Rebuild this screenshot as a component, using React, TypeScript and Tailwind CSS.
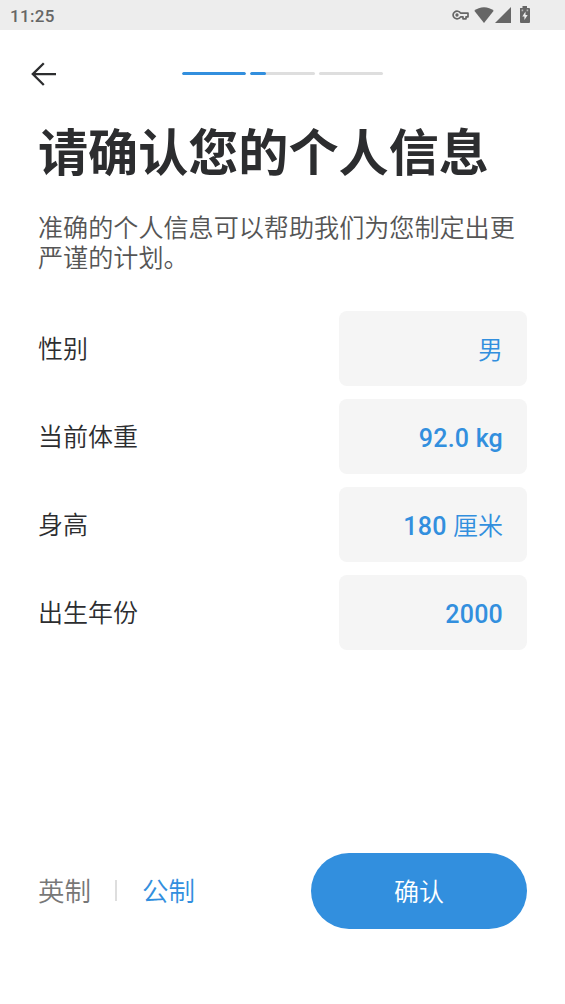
import { useState } from "react";

type Unit = "imperial" | "metric";

interface Field {
  label: string;
  value: string;
}

const FIELDS: Field[] = [
  { label: "性别", value: "男" },
  { label: "当前体重", value: "92.0 kg" },
  { label: "身高", value: "180 厘米" },
  { label: "出生年份", value: "2000" },
];

// fill of each step in the onboarding progress bar, in percent
const STEPS = [100, 25, 0];

export default function App() {
  const [unit, setUnit] = useState<Unit>("metric");

  return (
    <div className="flex h-[1004px] w-[565px] flex-col overflow-hidden bg-white font-[Roboto,'Noto_Sans_CJK_SC',sans-serif] text-[#2c2d2f]">
      <StatusBar />
      <Header />

      <main className="flex flex-1 flex-col px-[38px]">
        <h1 className="mt-[1px] text-[50.1px] leading-[72px] font-bold whitespace-nowrap">
          请确认您的个人信息
        </h1>
        <p className="mt-[24px] text-[25.1px] leading-[29.5px] font-[350] whitespace-nowrap text-[#555]">
          准确的个人信息可以帮助我们为您制定出更
          <br />
          严谨的计划。
        </p>

        <div className="mt-[38px] flex flex-col gap-[13px]">
          {FIELDS.map((field) => (
            <FieldRow key={field.label} {...field} />
          ))}
        </div>

        <div className="mt-auto mb-[75px] flex items-center justify-between">
          <div className="flex items-center text-[26.5px] leading-[36px]">
            <UnitButton
              label="英制"
              active={unit === "imperial"}
              onClick={() => setUnit("imperial")}
            />
            <span className="mr-[25px] mb-[2px] ml-[24px] h-[21px] w-[2px] bg-[#dedede]" />
            <UnitButton
              label="公制"
              active={unit === "metric"}
              onClick={() => setUnit("metric")}
            />
          </div>
          <button className="h-[76px] w-[216px] rounded-full bg-[#328fde] pt-[4px] text-[25px] font-[350] text-white">
            确认
          </button>
        </div>
      </main>
    </div>
  );
}

function StatusBar() {
  return (
    <div className="flex h-[30px] shrink-0 items-center justify-between bg-[#ededed] pr-[34px] pl-[10px] text-[#666]">
      <span className="pt-[2px] text-[17px] leading-[20px] font-medium tracking-[0.35px]">
        11:25
      </span>
      <div className="flex items-center">
        <svg width="17" height="10" viewBox="0 0 17 10" fill="none" stroke="currentColor" strokeWidth="1.7">
          <path d="M8.6 3.2A4 3.8 0 1 0 8.6 6.8H11V8.8H14V6.8H16V3.2Z" strokeLinejoin="round" />
          <circle cx="5" cy="5" r="0.8" />
        </svg>
        <svg className="ml-[5px]" width="20" height="16" viewBox="0 0 20 16" fill="currentColor">
          <path d="M10 16 0.3 3.8C3 1.5 6.3 0.3 10 0.3S17 1.5 19.7 3.8Z" />
        </svg>
        <svg className="ml-[1px]" width="16" height="16" viewBox="0 0 16 16" fill="currentColor">
          <path d="M0 16 16 0V16Z" />
        </svg>
        <svg className="ml-[8px]" width="12" height="18" viewBox="0 0 12 18">
          <path
            d="M1.2 2H3.5V0H8V2H10A1 1 0 0 1 11 3V16A1 1 0 0 1 10 17H2A1 1 0 0 1 1 16V3A1 1 0 0 1 1.2 2Z"
            fill="currentColor"
          />
          <path d="M6.5 5.5 3.3 10.6H5.4V14L8.7 8.9H6.5Z" fill="#ededed" />
          <path d="M2.6 3.6H4.2V5.2H2.6ZM7.6 3.6H9.2V5.2H7.6Z" fill="#b5b5b5" />
        </svg>
      </div>
    </div>
  );
}

function Header() {
  return (
    <header className="grid h-[87px] shrink-0 grid-cols-[182px_201px_1fr] items-center">
      <button className="pl-[31px]" aria-label="返回">
        <svg width="26" height="26" viewBox="0 0 26 26" fill="none" stroke="currentColor" strokeWidth="2.3">
          <path d="M25 13.1H1.8M12.8 2.2 1.8 13.1 12.8 24" />
        </svg>
      </button>
      <div className="grid grid-cols-3 gap-[4px]">
        {STEPS.map((fill, i) => (
          <div key={i} className="h-[3px] overflow-hidden rounded-full bg-[#dedede]">
            <div className="h-full rounded-full bg-[#328fde]" style={{ width: `${fill}%` }} />
          </div>
        ))}
      </div>
    </header>
  );
}

function FieldRow({ label, value }: Field) {
  return (
    <div className="flex h-[75px] items-center justify-between">
      <span className="pt-[3px] text-[25px] leading-[36px] font-[350]">{label}</span>
      <button className="h-full w-[188px] rounded-[8px] bg-[#f5f5f5] pt-[4px] pr-[24px] text-right text-[#328fde]">
        <FieldValue value={value} />
      </button>
    </div>
  );
}

// digits and latin units are set heavier than the Chinese ones
function FieldValue({ value }: { value: string }) {
  const parts = value.split(/([\u4e00-\u9fff]+)/).filter(Boolean);
  return (
    <span className="text-[25px] leading-[36px] whitespace-pre">
      {parts.map((part) => (
        <span
          key={part}
          className={/[\u4e00-\u9fff]/.test(part) ? "font-[350]" : "font-medium tracking-[0.2px]"}
        >
          {part}
        </span>
      ))}
    </span>
  );
}

function UnitButton({
  label,
  active,
  onClick,
}: {
  label: string;
  active: boolean;
  onClick: () => void;
}) {
  return (
    <button
      onClick={onClick}
      className={`pt-[2px] font-[350] ${active ? "text-[#328fde]" : "text-[#777]"}`}
    >
      {label}
    </button>
  );
}
